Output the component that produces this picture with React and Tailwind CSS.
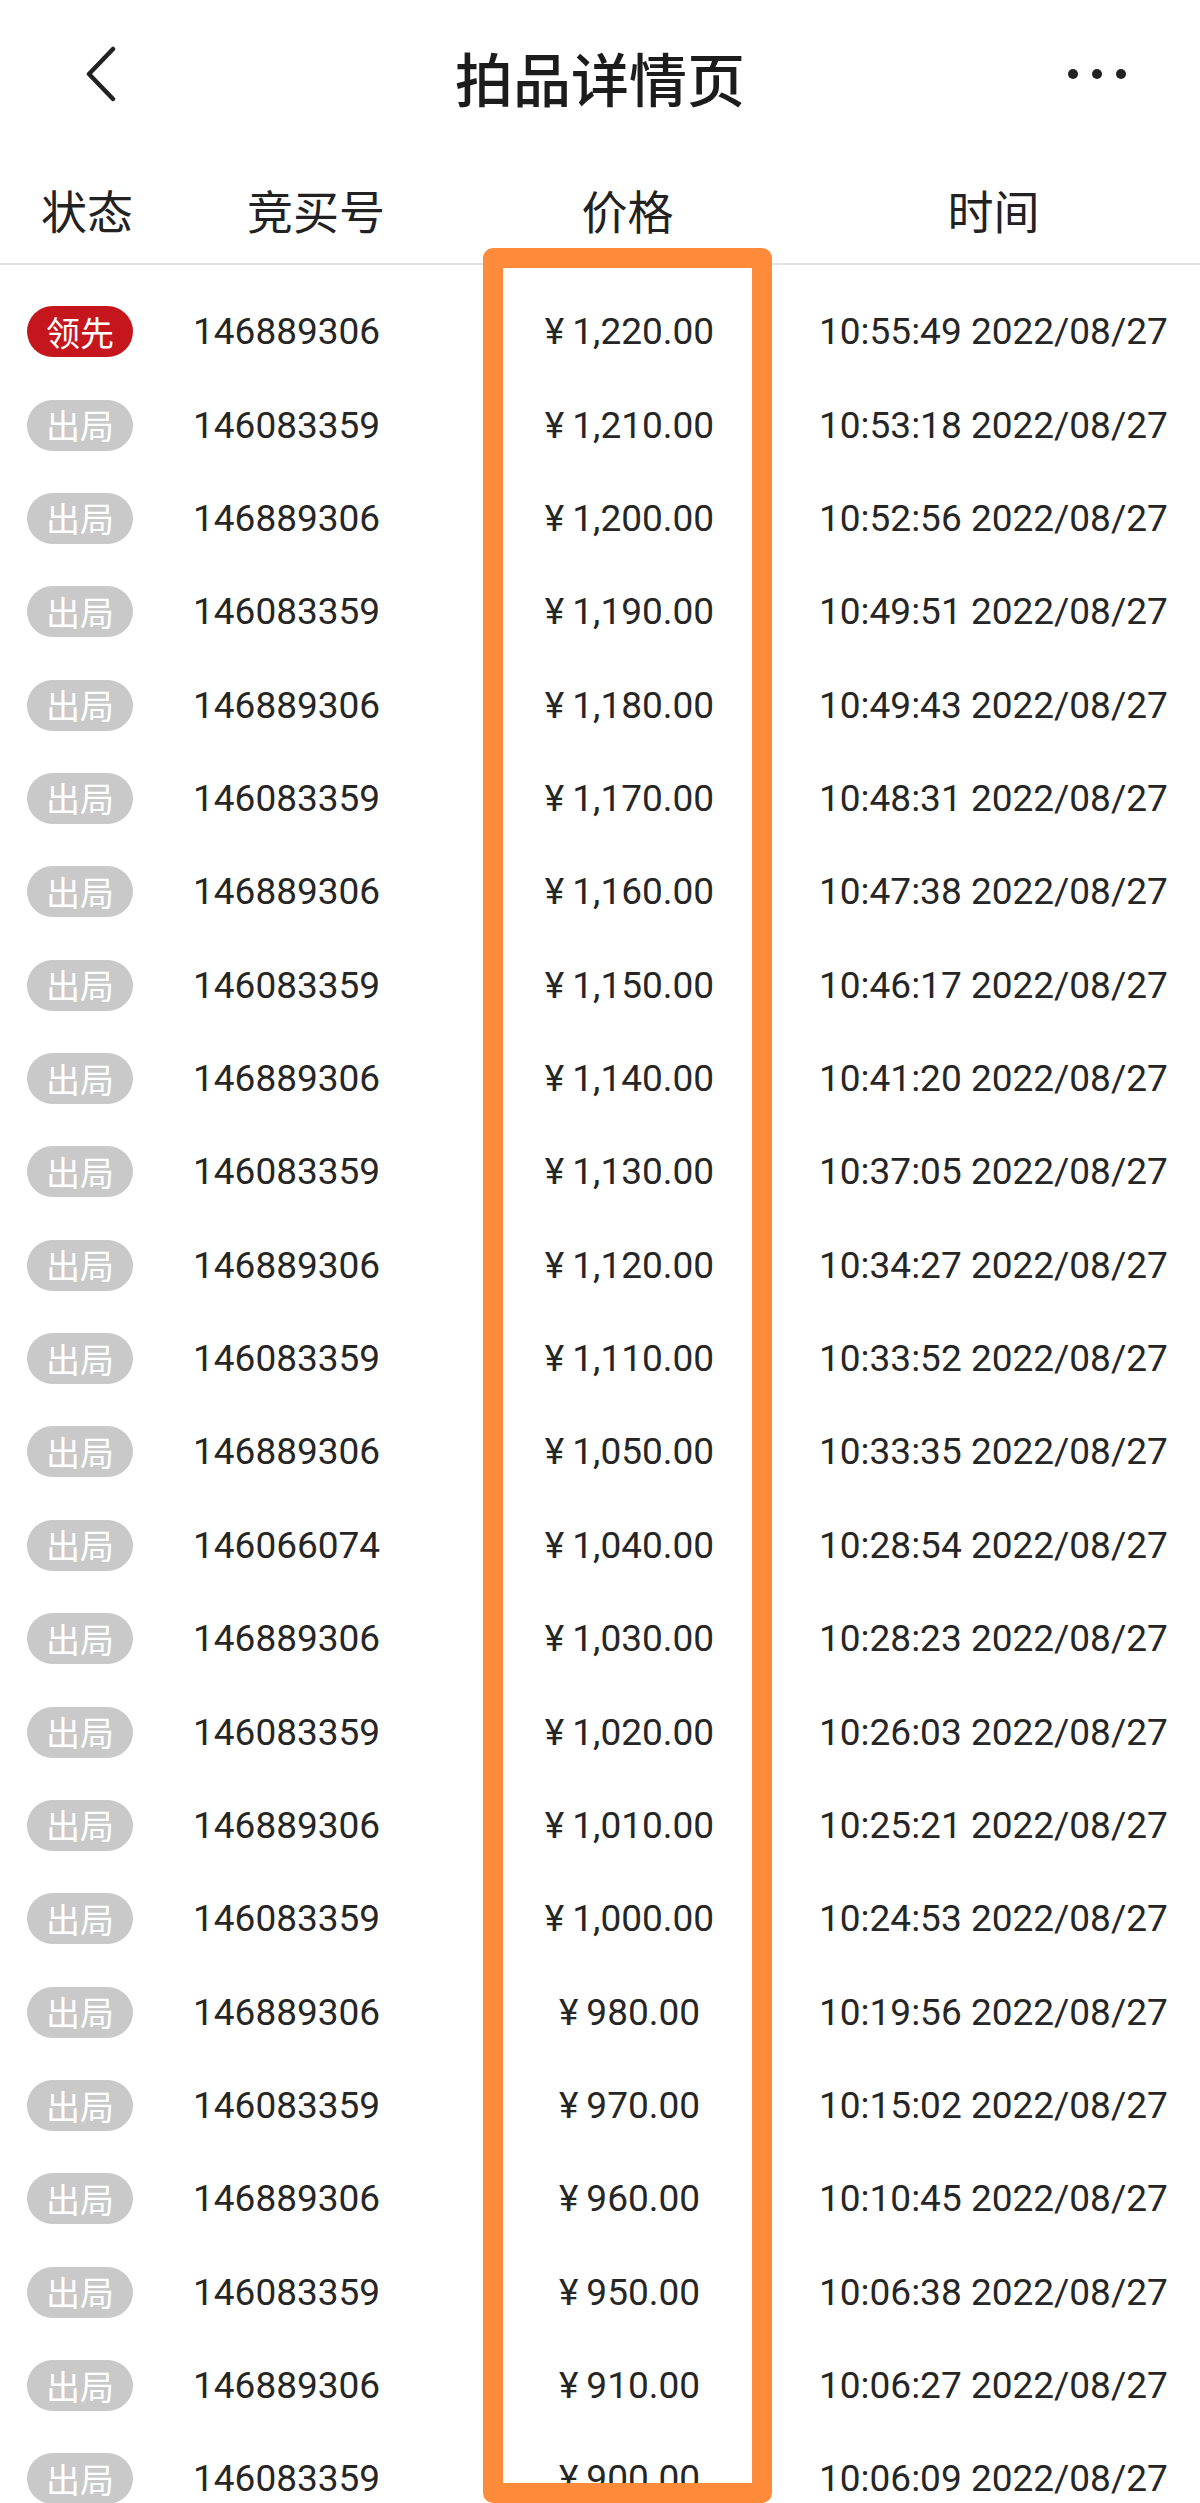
import React from 'react';

const bids = [
  ['146889306', '1,220.00', '10:55:49'],
  ['146083359', '1,210.00', '10:53:18'],
  ['146889306', '1,200.00', '10:52:56'],
  ['146083359', '1,190.00', '10:49:51'],
  ['146889306', '1,180.00', '10:49:43'],
  ['146083359', '1,170.00', '10:48:31'],
  ['146889306', '1,160.00', '10:47:38'],
  ['146083359', '1,150.00', '10:46:17'],
  ['146889306', '1,140.00', '10:41:20'],
  ['146083359', '1,130.00', '10:37:05'],
  ['146889306', '1,120.00', '10:34:27'],
  ['146083359', '1,110.00', '10:33:52'],
  ['146889306', '1,050.00', '10:33:35'],
  ['146066074', '1,040.00', '10:28:54'],
  ['146889306', '1,030.00', '10:28:23'],
  ['146083359', '1,020.00', '10:26:03'],
  ['146889306', '1,010.00', '10:25:21'],
  ['146083359', '1,000.00', '10:24:53'],
  ['146889306', '980.00', '10:19:56'],
  ['146083359', '970.00', '10:15:02'],
  ['146889306', '960.00', '10:10:45'],
  ['146083359', '950.00', '10:06:38'],
  ['146889306', '910.00', '10:06:27'],
  ['146083359', '900.00', '10:06:09'],
];

const cjk = "font-['Noto_Sans_CJK_SC',sans-serif]";
const num = "font-['Roboto','Noto_Sans_CJK_SC',sans-serif]";

const StatusBadge = ({ lead }) => (
  <span
    className={`ml-[27px] flex h-[51px] w-[106px] items-center justify-center rounded-full text-[34px] leading-none text-white ${cjk} ${
      lead ? 'bg-[#c6161d]' : 'bg-[#c9c9c9]'
    }`}
  >
    {lead ? '领先' : '出局'}
  </span>
);

const App = () => {
  return (
    <div className="relative h-[2503px] w-[1200px] overflow-hidden bg-white text-[#222]">
      {/* top bar */}
      <div className="grid h-[154px] grid-cols-[1fr_auto_1fr] items-center">
        <div className="flex items-center">
          <svg className="ml-[86px]" width="32" height="62" viewBox="0 0 32 62" fill="none">
            <path d="M27 3 L3 28 L27 53" stroke="#222" strokeWidth="4.5" strokeLinecap="round" strokeLinejoin="round" />
          </svg>
        </div>
        <h1 className={`text-[58px] font-medium leading-none text-[#1c1c1c] ${cjk}`}>拍品详情页</h1>
        <div className="flex justify-end">
          <svg className="mr-[72px] mt-[-6px]" width="60" height="12" viewBox="0 0 60 12" fill="#222">
            <circle cx="5" cy="6" r="5" />
            <circle cx="29" cy="6" r="5" />
            <circle cx="53" cy="6" r="5" />
          </svg>
        </div>
      </div>

      {/* column headings */}
      <div className={`flex h-[109px] items-center text-[46px] leading-none ${cjk}`}>
        <div className="w-[170px] pl-[41px]">状态</div>
        <div className="w-[314px] pl-[77px]">竞买号</div>
        <div className="w-[287px] text-center">价格</div>
        <div className="flex-1 pl-[16px] text-center">时间</div>
      </div>
      <div className="h-[2px] bg-[#e3e3e3]" />

      {/* bid list */}
      <div className="pt-[20px]">
        {bids.map(([id, price, time], i) => (
          <div key={i} className={`flex h-[93.36px] items-center text-[37px] leading-none text-[#262626] ${num}`}>
            <div className="w-[170px]">
              <StatusBadge lead={i === 0} />
            </div>
            <div className="w-[314px] pl-[23px]">{id}</div>
            <div className="w-[287px] pl-[4px] text-center">
              <span className="mr-[8px]">¥</span>
              {price}
            </div>
            <div className="flex-1 pl-[48px]">{time} 2022/08/27</div>
          </div>
        ))}
      </div>

      {/* highlight frame around the price column */}
      <div className="pointer-events-none absolute left-[483px] top-[248px] h-[2255px] w-[289px] rounded-[10px] border-[20px] border-[#fd8b3a]" />
    </div>
  );
};

export default App;
